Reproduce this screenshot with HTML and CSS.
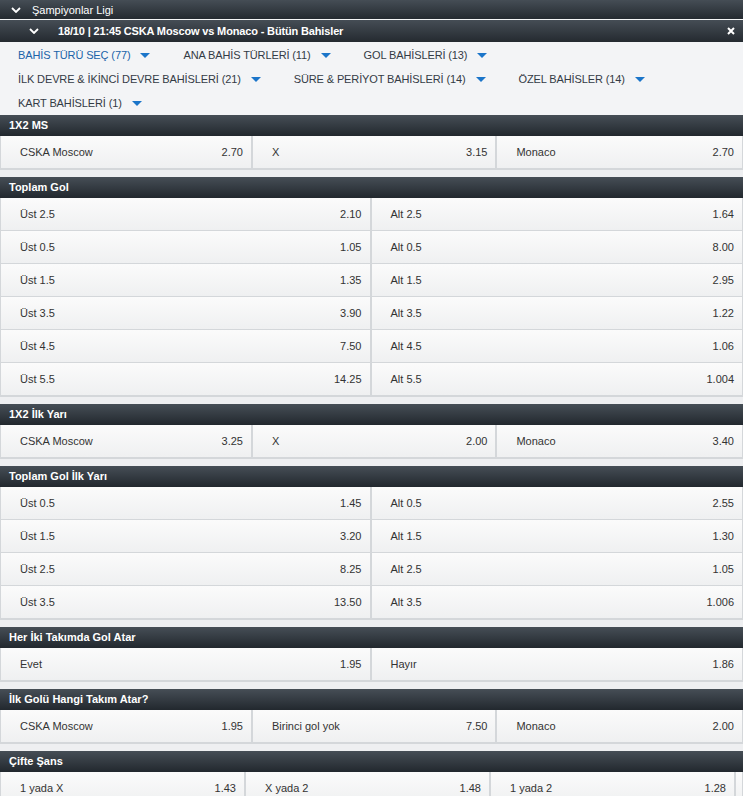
FILE: index.html
```html
<!DOCTYPE html>
<html lang="tr">
<head>
    <meta charset="UTF-8">
    <meta name="viewport" content="width=device-width, initial-scale=1.0">
    <title>CSKA Moscow vs Monaco - Bütün Bahisler</title>
    <link rel="stylesheet" href="styles.css">
</head>
<body>
    <div class="league-bar">
        <svg class="chevron" width="10" height="6" viewBox="0 0 10 6"><polyline points="1,1 5,5 9,1"/></svg>
        <span>Şampiyonlar Ligi</span>
    </div>

    <div class="match-bar">
        <svg class="chevron" width="10" height="6" viewBox="0 0 10 6"><polyline points="1,1 5,5 9,1"/></svg>
        <span class="match-title">18/10 | 21:45 CSKA Moscow vs Monaco - Bütün Bahisler</span>
        <svg class="close-btn" width="8" height="8" viewBox="0 0 8 8"><path d="M1 1L7 7M7 1L1 7"/></svg>
    </div>

    <div class="filter-bar">
        <a class="filter-item active">BAHİS TÜRÜ SEÇ (77)<i class="caret"></i></a>
        <a class="filter-item">ANA BAHİS TÜRLERİ (11)<i class="caret"></i></a>
        <a class="filter-item">GOL BAHİSLERİ (13)<i class="caret"></i></a>
        <a class="filter-item">İLK DEVRE &amp; İKİNCİ DEVRE BAHİSLERİ (21)<i class="caret"></i></a>
        <a class="filter-item">SÜRE &amp; PERİYOT BAHİSLERİ (14)<i class="caret"></i></a>
        <a class="filter-item">ÖZEL BAHİSLER (14)<i class="caret"></i></a>
        <a class="filter-item">KART BAHİSLERİ (1)<i class="caret"></i></a>
    </div>

    <!-- 1X2 MS -->
    <div class="market">
        <div class="market-header">1X2 MS</div>
        <div class="odds-row cols-3">
            <div class="odd"><span>CSKA Moscow</span><span>2.70</span></div>
            <div class="odd"><span>X</span><span>3.15</span></div>
            <div class="odd"><span>Monaco</span><span>2.70</span></div>
        </div>
    </div>

    <!-- Toplam Gol -->
    <div class="market">
        <div class="market-header">Toplam Gol</div>
        <div class="odds-row cols-2">
            <div class="odd"><span>Üst 2.5</span><span>2.10</span></div>
            <div class="odd"><span>Alt 2.5</span><span>1.64</span></div>
        </div>
        <div class="odds-row cols-2">
            <div class="odd"><span>Üst 0.5</span><span>1.05</span></div>
            <div class="odd"><span>Alt 0.5</span><span>8.00</span></div>
        </div>
        <div class="odds-row cols-2">
            <div class="odd"><span>Üst 1.5</span><span>1.35</span></div>
            <div class="odd"><span>Alt 1.5</span><span>2.95</span></div>
        </div>
        <div class="odds-row cols-2">
            <div class="odd"><span>Üst 3.5</span><span>3.90</span></div>
            <div class="odd"><span>Alt 3.5</span><span>1.22</span></div>
        </div>
        <div class="odds-row cols-2">
            <div class="odd"><span>Üst 4.5</span><span>7.50</span></div>
            <div class="odd"><span>Alt 4.5</span><span>1.06</span></div>
        </div>
        <div class="odds-row cols-2">
            <div class="odd"><span>Üst 5.5</span><span>14.25</span></div>
            <div class="odd"><span>Alt 5.5</span><span>1.004</span></div>
        </div>
    </div>

    <!-- 1X2 Ilk Yari -->
    <div class="market">
        <div class="market-header">1X2 İlk Yarı</div>
        <div class="odds-row cols-3">
            <div class="odd"><span>CSKA Moscow</span><span>3.25</span></div>
            <div class="odd"><span>X</span><span>2.00</span></div>
            <div class="odd"><span>Monaco</span><span>3.40</span></div>
        </div>
    </div>

    <!-- Toplam Gol Ilk Yari -->
    <div class="market">
        <div class="market-header">Toplam Gol İlk Yarı</div>
        <div class="odds-row cols-2">
            <div class="odd"><span>Üst 0.5</span><span>1.45</span></div>
            <div class="odd"><span>Alt 0.5</span><span>2.55</span></div>
        </div>
        <div class="odds-row cols-2">
            <div class="odd"><span>Üst 1.5</span><span>3.20</span></div>
            <div class="odd"><span>Alt 1.5</span><span>1.30</span></div>
        </div>
        <div class="odds-row cols-2">
            <div class="odd"><span>Üst 2.5</span><span>8.25</span></div>
            <div class="odd"><span>Alt 2.5</span><span>1.05</span></div>
        </div>
        <div class="odds-row cols-2">
            <div class="odd"><span>Üst 3.5</span><span>13.50</span></div>
            <div class="odd"><span>Alt 3.5</span><span>1.006</span></div>
        </div>
    </div>

    <!-- Her Iki Takimda Gol Atar -->
    <div class="market">
        <div class="market-header">Her İki Takımda Gol Atar</div>
        <div class="odds-row cols-2">
            <div class="odd"><span>Evet</span><span>1.95</span></div>
            <div class="odd"><span>Hayır</span><span>1.86</span></div>
        </div>
    </div>

    <!-- Ilk Golu Hangi Takim Atar -->
    <div class="market">
        <div class="market-header">İlk Golü Hangi Takım Atar?</div>
        <div class="odds-row cols-3">
            <div class="odd"><span>CSKA Moscow</span><span>1.95</span></div>
            <div class="odd"><span>Birinci gol yok</span><span>7.50</span></div>
            <div class="odd"><span>Monaco</span><span>2.00</span></div>
        </div>
    </div>

    <!-- Cifte Sans -->
    <div class="market">
        <div class="market-header">Çifte Şans</div>
        <div class="odds-row cols-3 narrow">
            <div class="odd"><span>1 yada X</span><span>1.43</span></div>
            <div class="odd"><span>X yada 2</span><span>1.48</span></div>
            <div class="odd"><span>1 yada 2</span><span>1.28</span></div>
            <div class="odd empty"></div>
        </div>
    </div>
</body>
</html>
```

FILE: styles.css
```css
body {
    font-family: "Liberation Sans", Arial, sans-serif;
    font-size: 11px;
    margin: 0;
    padding: 0;
    background: #eeeff1;
    color: #333;
}

.league-bar,
.match-bar {
    display: flex;
    align-items: center;
    color: white;
    background: linear-gradient(#454d55, #242a30);
}

.league-bar {
    height: 19px;
    padding-left: 11px;
    border-bottom: 1px solid #f4f5f6;
}

.league-bar .chevron {
    margin-right: 11px;
}

.match-bar {
    height: 22px;
    padding: 0 8px 0 29px;
}

.match-bar .chevron {
    margin-right: 19px;
}

.chevron polyline {
    fill: none;
    stroke: white;
    stroke-width: 1.8;
}

.match-title {
    font-weight: bold;
    letter-spacing: -0.15px;
    flex: 1;
}

.close-btn path {
    stroke: white;
    stroke-width: 2;
}

.filter-bar {
    display: flex;
    flex-wrap: wrap;
    column-gap: 33px;
    padding: 1px 0 0 18px;
    height: 72px;
    background: #f3f4f6;
    text-transform: uppercase;
}

.filter-item {
    display: inline-flex;
    align-items: center;
    height: 24px;
    color: #333b45;
    letter-spacing: -0.12px;
    cursor: pointer;
}

.filter-item.active {
    color: #2063a9;
}

.caret {
    display: inline-block;
    margin-left: 10px;
    border-left: 5px solid transparent;
    border-right: 5px solid transparent;
    border-top: 5px solid #1b75c9;
}

.market {
    margin-bottom: 7px;
}

.market-header {
    height: 21px;
    line-height: 21px;
    padding-left: 9px;
    font-weight: bold;
    color: white;
    background: linear-gradient(#464e56, #22282e);
}

.odds-row {
    display: grid;
    height: 33px;
    box-sizing: border-box;
    border-left: 1px solid #d4d7da;
    border-right: 1px solid #d4d7da;
    border-bottom: 1px solid #d4d7da;
}

.odds-row:last-child {
    height: 34px;
    border-bottom-width: 2px;
}

.cols-2 {
    grid-template-columns: 1fr 1fr;
}

.cols-3 {
    grid-template-columns: 34% 33% 1fr;
}

.cols-3.narrow {
    grid-template-columns: 245px 245px 245px 1fr;
}

.odd {
    display: flex;
    align-items: center;
    justify-content: space-between;
    padding: 0 8px 0 19px;
    background: linear-gradient(#fbfbfb, #eff0f1);
    border-right: 2px solid #d4d7da;
    cursor: pointer;
}

.odd:last-child {
    border-right: none;
}

.odd.empty {
    padding: 0;
}
```
